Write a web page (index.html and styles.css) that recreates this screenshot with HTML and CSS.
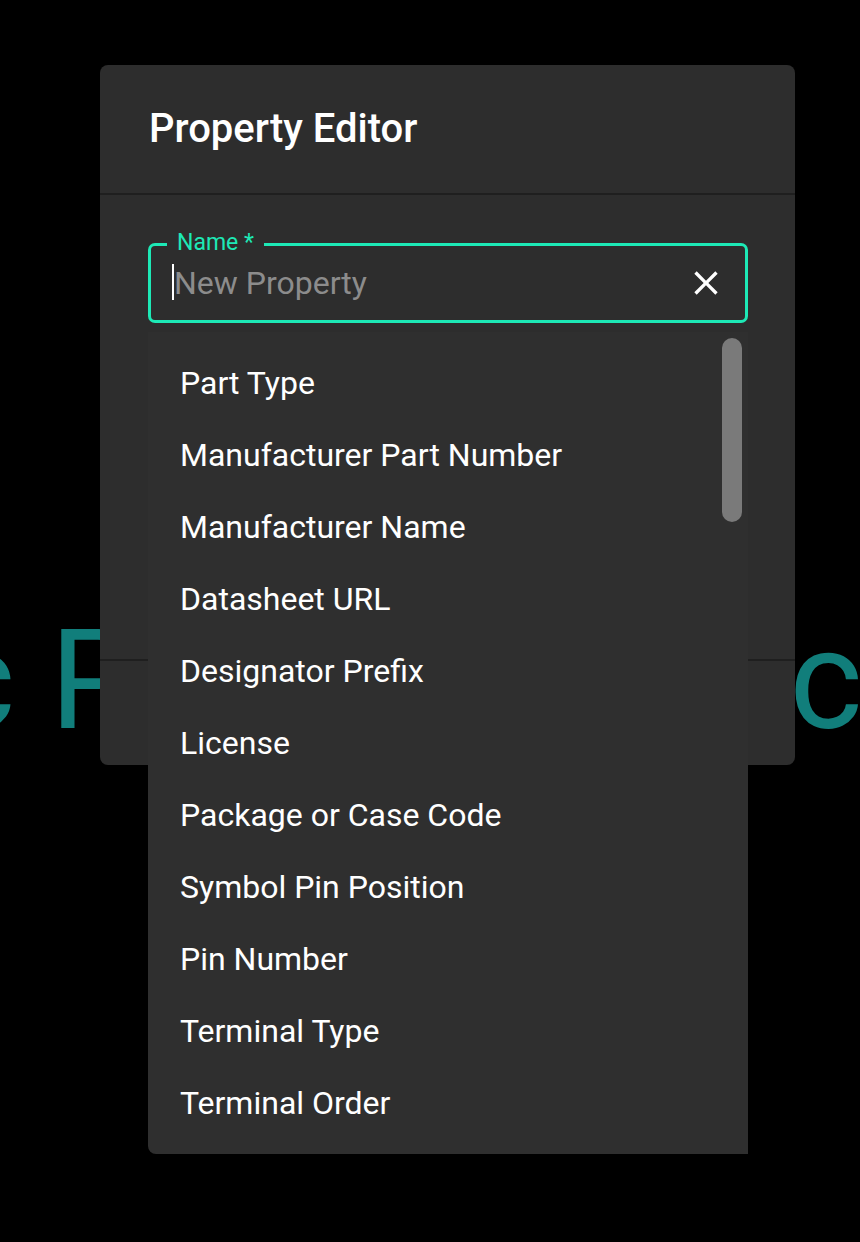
FILE: index.html
```html
<!DOCTYPE html>
<html>
<head>
<meta charset="utf-8">
<link rel="stylesheet" href="styles.css">
</head>
<body>
<div class="page">
  <div class="bg-title">Basic Property <span class="bg-last">Doc</span></div>
</div>

<div class="dialog">
  <div class="dialog-header">Property Editor</div>
  <div class="dialog-body">
    <div class="field">
      <span class="field-label">Name *</span>
      <div class="field-input">
        <span class="caret"></span>
        <span class="placeholder">New Property</span>
        <svg class="clear" viewBox="0 0 24 24" width="40" height="40"><path fill="#fff" d="M19 6.41 17.59 5 12 10.59 6.41 5 5 6.41 10.59 12 5 17.59 6.41 19 12 13.41 17.59 19 19 17.59 13.41 12z"/></svg>
      </div>
    </div>
  </div>
  <div class="dialog-footer"></div>
</div>

<div class="menu">
  <ul class="menu-list">
    <li>Part Type</li>
    <li>Manufacturer Part Number</li>
    <li>Manufacturer Name</li>
    <li>Datasheet URL</li>
    <li>Designator Prefix</li>
    <li>License</li>
    <li>Package or Case Code</li>
    <li>Symbol Pin Position</li>
    <li>Pin Number</li>
    <li>Terminal Type</li>
    <li>Terminal Order</li>
  </ul>
  <div class="scroll-thumb"></div>
</div>
</body>
</html>
```

FILE: styles.css
```css
html, body {
  margin: 0;
  padding: 0;
  background: #000;
  font-family: Roboto, "Liberation Sans", sans-serif;
}

.page {
  width: 860px;
  height: 1242px;
  overflow: hidden;
}

.bg-title {
  padding-top: 610px;
  font-size: 140px;
  line-height: 140px;
  font-weight: 400;
  color: #117e7b;
  white-space: nowrap;
  text-indent: -328px;
}

.bg-last {
  margin-left: 3px;
}

.dialog {
  position: absolute;
  left: 100px;
  top: 65px;
  width: 695px;
  height: 700px;
  background: #2d2d2d;
  border-radius: 8px;
  display: flex;
  flex-direction: column;
}

.dialog-header {
  height: 128px;
  line-height: 127px;
  padding-left: 49px;
  font-size: 40px;
  font-weight: 500;
  color: #fff;
  border-bottom: 2px solid #1f1f1f;
}

.dialog-body {
  height: 466px;
  padding: 48px 47px 0 48px;
  box-sizing: border-box;
  border-bottom: 2px solid #1f1f1f;
}

.dialog-footer {
  flex: 1;
}

.field {
  position: relative;
}

.field-label {
  position: absolute;
  left: 19px;
  top: -13px;
  padding: 0 10px;
  background: #2d2d2d;
  font-size: 23px;
  line-height: 26px;
  color: #1de9b6;
}

.field-input {
  height: 80px;
  box-sizing: border-box;
  border: 3px solid #1de9b6;
  border-radius: 7px;
  display: flex;
  align-items: center;
  padding-left: 21px;
  padding-right: 19px;
}

.caret {
  width: 2px;
  height: 36px;
  background: #fff;
  margin-top: -2px;
}

.placeholder {
  flex: 1;
  font-size: 32px;
  color: #8c8c8c;
}

.clear {
  display: block;
}

.menu {
  position: absolute;
  left: 148px;
  top: 332px;
  width: 600px;
  height: 822px;
  background: #2f2f2f;
  border-radius: 0 0 0 8px;
  overflow: hidden;
}

.menu-list {
  list-style: none;
  margin: 0;
  padding: 15px 0;
}

.menu-list li {
  height: 72px;
  line-height: 72px;
  padding-left: 32px;
  font-size: 32px;
  color: #fff;
}

.scroll-thumb {
  position: absolute;
  left: 574px;
  top: 6px;
  width: 20px;
  height: 184px;
  border-radius: 10px;
  background: #7a7a7a;
}
```
